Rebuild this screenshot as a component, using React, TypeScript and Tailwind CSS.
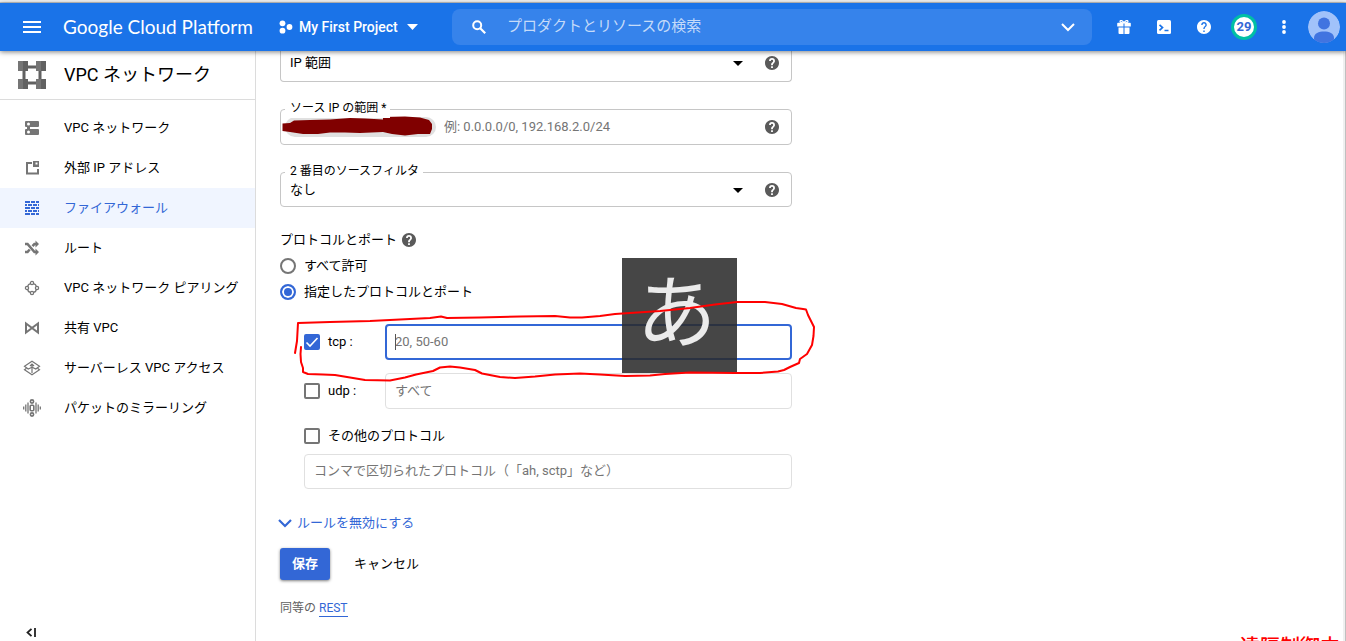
import React from 'react';

type IconProps = { children: React.ReactNode };

const NavIcon: React.FC<IconProps> = ({ children }) => (
  <svg className="w-5 h-5 shrink-0" viewBox="0 0 20 20" fill="none" aria-hidden="true">
    {children}
  </svg>
);

const navItems: { label: string; active?: boolean; icon: React.ReactNode }[] = [
  {
    label: 'VPC ネットワーク',
    icon: (
      <path
        fill="currentColor"
        fillRule="evenodd"
        d="M4 3h12a1 1 0 0 1 1 1v4a1 1 0 0 1-1 1H8v2h8a1 1 0 0 1 1 1v4a1 1 0 0 1-1 1H4a1 1 0 0 1-1-1v-4a1 1 0 0 1 1-1h1V9H4a1 1 0 0 1-1-1V4a1 1 0 0 1 1-1zm2.500 1.500a1.500 1.500 0 1 0 0 3 1.500 1.500 0 0 0 0-3zm0 8a1.500 1.500 0 1 0 0 3 1.500 1.500 0 0 0 0-3z"
      />
    ),
  },
  {
    label: '外部 IP アドレス',
    icon: (
      <>
        <path stroke="currentColor" strokeWidth="2" d="M10 5H5v10.500h11V11" />
        <path fill="currentColor" fillRule="evenodd" d="M11 3h6v6h-6zm2.500 1.500v2h2v-2z" />
      </>
    ),
  },
  {
    label: 'ファイアウォール',
    active: true,
    icon: (
      <path
        fill="currentColor"
        d="M3 3h5v2H3zM9 3h4v2H9zM14 3h3v2h-3zM3 6h2v2H3zM6 6h4v2H6zM11 6h4v2h-4zM16 6h1v2h-1zM3 9h5v2H3zM9 9h4v2H9zM14 9h3v2h-3zM3 12h2v2H3zM6 12h4v2H6zM11 12h4v2h-4zM16 12h1v2h-1zM3 15h5v2H3zM9 15h4v2H9zM14 15h3v2h-3z"
      />
    ),
  },
  {
    label: 'ルート',
    icon: (
      <>
        <path
          stroke="currentColor"
          strokeWidth="2.600"
          d="M3 6h2.500l7 8H14M3 14h2.500l2.200-2.500M10.500 8.200L12.500 6H14"
        />
        <path fill="currentColor" d="M13.500 2.500L17 6l-3.500 3.500zM13.500 10.500l3.500 3.500-3.500 3.500z" />
      </>
    ),
  },
  {
    label: 'VPC ネットワーク ピアリング',
    icon: (
      <g stroke="currentColor" strokeWidth="1.300">
        <circle cx="10" cy="5" r="1.600" />
        <circle cx="15" cy="10" r="1.600" />
        <circle cx="10" cy="15" r="1.600" />
        <circle cx="5" cy="10" r="1.600" />
        <path d="M8.400 5.800Q6 6 5.800 8.400M11.600 5.800Q14 6 14.200 8.400M5.800 11.600Q6 14 8.400 14.200M14.200 11.600Q14 14 11.600 14.200" />
      </g>
    ),
  },
  {
    label: '共有 VPC',
    icon: (
      <path
        stroke="currentColor"
        strokeWidth="2"
        d="M4 5.500v9l6-4.500zM16 5.500v9L10 10z"
      />
    ),
  },
  {
    label: 'サーバーレス VPC アクセス',
    icon: (
      <g stroke="currentColor" strokeWidth="1.200">
        <path d="M10 9.200L6.200 11 2.500 8.200 10 3.300l7.500 4.900-3.700 2.800z" />
        <path d="M4.500 10.200l-2 1.600L10 16.700l7.500-4.900-2-1.600" />
        <path d="M10 15V6M8 8l2-2 2 2" />
      </g>
    ),
  },
  {
    label: 'パケットのミラーリング',
    icon: (
      <g stroke="currentColor" strokeWidth="1.600">
        <circle cx="10" cy="3.500" r="1.600" />
        <circle cx="10" cy="16.500" r="1.600" />
        <rect x="8.200" y="7.200" width="3.600" height="5.600" rx="1" />
        <path d="M6 4.500v11M14 4.500v11M1.700 8.500v3M18.300 8.500v3M3.800 6.500v7M16.200 6.500v7" strokeWidth="1.300" />
      </g>
    ),
  },
];

const HelpButton: React.FC = () => (
  <button type="button" aria-label="ヘルプ" className="shrink-0 text-[#5a5a5a]">
    <svg className="block w-[14px] h-[14px]" viewBox="2 2 20 20" fill="currentColor">
      <path d="M12 2C6.480 2 2 6.480 2 12s4.480 10 10 10 10-4.480 10-10S17.520 2 12 2zm1.300 17h-2.600v-2.500h2.600V19zm2.100-7.700l-.9.900c-.8.800-1.200 1.500-1.200 2.900h-2.600v-.6c0-1.100.4-2.100 1.200-2.800l1.200-1.300c.4-.3.600-.8.600-1.400a1.700 1.700 0 0 0-3.400 0H7.800a4.200 4.200 0 0 1 8.400 0c0 .9-.3 1.700-.8 2.300z" />
    </svg>
  </button>
);

const SelectBox: React.FC<{ id: string; value: string }> = ({ id, value }) => (
  <div className="relative flex-1">
    <select
      id={id}
      aria-label={value}
      className="block w-full appearance-none bg-transparent outline-none text-[13px] leading-5 text-black"
    >
      <option>{value}</option>
    </select>
    <svg
      className="absolute right-0 top-2 w-[10px] h-[5px] pointer-events-none"
      viewBox="0 0 10 5"
    >
      <path d="M0 0h10L5 5z" fill="#000" />
    </svg>
  </div>
);

const FieldLabel: React.FC<{ htmlFor: string; children: string }> = ({ htmlFor, children }) => (
  <label
    htmlFor={htmlFor}
    className="absolute -top-3 left-1 pl-[5px] pr-1 bg-white text-[12px] leading-5"
  >
    {children}
  </label>
);

const CheckBox: React.FC<{ id: string; defaultChecked?: boolean }> = ({ id, defaultChecked }) => (
  <span className="relative block w-4 h-4 shrink-0">
    <input
      id={id}
      type="checkbox"
      defaultChecked={defaultChecked}
      className="peer block w-4 h-4 appearance-none border-2 border-[#757575] rounded-[2px] checked:bg-[#3367d6] checked:border-[#3367d6]"
    />
    <svg
      className="absolute inset-0 hidden peer-checked:block pointer-events-none"
      viewBox="0 0 16 16"
      fill="none"
    >
      <path d="M2.500 8.500l3.500 3.500 7.500-8" stroke="#fff" strokeWidth="1.600" />
    </svg>
  </span>
);

const RadioRow: React.FC<{ label: string; defaultChecked?: boolean }> = ({
  label,
  defaultChecked,
}) => (
  <label className="flex items-center gap-2 h-[26px]">
    <input
      type="radio"
      name="protocols"
      defaultChecked={defaultChecked}
      className="w-4 h-4 appearance-none rounded-full border-2 border-[#757575] checked:border-[#3367d6] checked:bg-[#3367d6] checked:shadow-[inset_0_0_0_2px_#fff]"
    />
    {label}
  </label>
);

const Header: React.FC = () => (
  <header className="relative z-10 shrink-0 flex items-center h-12 pr-[2px] bg-[#1a73e8] text-white shadow-[0_1px_5px_rgba(0,0,0,0.5)]">
    <div className="flex items-center w-[452px] shrink-0 pl-[23px]">
      <button type="button" aria-label="メニュー" className="mr-[22px]">
        <svg className="block w-[18px] h-3" viewBox="0 0 18 12" fill="currentColor">
          <path d="M0 0h18v2H0zM0 5h18v2H0zM0 10h18v2H0z" />
        </svg>
      </button>
      <a href="#" className="w-[216px] font-[Lato,sans-serif] text-[19px] leading-6 whitespace-nowrap">
        Google Cloud Platform
      </a>
      <button
        type="button"
        className="flex items-center text-[14px] leading-5 font-medium whitespace-nowrap"
      >
        <svg className="w-[14px] h-[14px] mr-[6px]" viewBox="0 0 14 14" fill="currentColor">
          <circle cx="3.500" cy="3.300" r="2.900" />
          <circle cx="3.500" cy="10.700" r="2.900" />
          <circle cx="10.500" cy="7" r="2.900" />
        </svg>
        My First Project
        <svg className="w-[11px] h-[6px] ml-[9px]" viewBox="0 0 11 6" fill="currentColor">
          <path d="M0 0h11L5.500 6z" />
        </svg>
      </button>
    </div>
    <div className="flex flex-1 items-center h-9 mr-3 pl-5 pr-4 rounded-lg bg-[#3683eb]">
      <svg className="w-[14px] h-[14px] mr-[21px] shrink-0" viewBox="0 0 14 14" fill="none" stroke="#fff">
        <circle cx="5.200" cy="5.200" r="4" strokeWidth="2" />
        <path d="M8.200 8.200l5 5" strokeWidth="2.200" />
      </svg>
      <input
        type="search"
        aria-label="検索"
        placeholder="プロダクトとリソースの検索"
        className="flex-1 min-w-0 pb-[2px] bg-transparent outline-none text-[15px] leading-6 placeholder:text-[#c5dbf9]"
      />
      <svg className="w-4 h-4" viewBox="0 0 16 16" fill="none" stroke="#fff" strokeWidth="2">
        <path d="M2 5l6 6 6-6" />
      </svg>
    </div>
    <button type="button" aria-label="ギフト" className="flex w-10 h-10 items-center justify-center">
      <svg className="w-[14px] h-[14px]" viewBox="0 0 14 14" fill="currentColor">
        <path d="M1.500 7.500h5V14h-4a1 1 0 0 1-1-1zM7.500 7.500h5V13a1 1 0 0 1-1 1h-4zM1 2.700h5.500v3.800H.2V3.500a.8.800 0 0 1 .8-.8zM7.500 2.700H13a.8.800 0 0 1 .8.800v3H7.500z" />
        <path
          d="M7 3C6 .6 3.200-.4 3 1.600 3 2.600 4 3 7 3zM7 3c1-2.400 3.800-3.400 4-1.400C11 2.600 10 3 7 3z"
          fill="none"
          stroke="currentColor"
          strokeWidth="1.200"
        />
      </svg>
    </button>
    <button type="button" aria-label="Cloud Shell" className="flex w-10 h-10 items-center justify-center">
      <svg className="w-[14px] h-[14px]" viewBox="0 0 14 14" fill="none">
        <rect width="14" height="14" rx="1.500" fill="#fff" />
        <path d="M2.500 4.800L5.500 7.500l-3 2.800M7.500 10.500h4" stroke="#1a73e8" strokeWidth="1.700" />
      </svg>
    </button>
    <button type="button" aria-label="ヘルプ" className="flex w-10 h-10 items-center justify-center">
      <svg className="w-[14px] h-[14px]" viewBox="2 2 20 20" fill="currentColor">
        <path d="M12 2C6.480 2 2 6.480 2 12s4.480 10 10 10 10-4.480 10-10S17.520 2 12 2zm1 17h-2v-2h2v2zm2.070-7.750l-.9.920C13.450 12.900 13 13.500 13 15h-2v-.5c0-1.100.45-2.100 1.170-2.830l1.240-1.260c.37-.36.590-.86.590-1.410 0-1.100-.9-2-2-2s-2 .9-2 2H8c0-2.210 1.790-4 4-4s4 1.790 4 4c0 .88-.36 1.680-.93 2.250z" />
      </svg>
    </button>
    <button type="button" aria-label="通知" className="flex w-10 h-10 items-center justify-center">
      <span className="flex w-[26px] h-[26px] items-center justify-center rounded-full border-[3px] border-[#00bfa5] bg-white text-[13px] leading-5 font-bold text-[#3367d6]">
        29
      </span>
    </button>
    <button type="button" aria-label="設定" className="flex w-10 h-10 items-center justify-center">
      <svg className="w-1 h-[14px]" viewBox="0 0 4 14" fill="currentColor">
        <circle cx="2" cy="2" r="1.900" />
        <circle cx="2" cy="7" r="1.900" />
        <circle cx="2" cy="12" r="1.900" />
      </svg>
    </button>
    <button type="button" aria-label="アカウント" className="flex w-10 h-10 items-center justify-center">
      <svg className="w-8 h-8 rounded-full" viewBox="0 0 32 32">
        <circle cx="16" cy="16" r="16" fill="#a1c2fa" />
        <circle cx="16" cy="12.500" r="6" fill="#4174e0" />
        <path d="M6 27c0-5 5-6.500 10-6.500S26 22 26 27v5H6z" fill="#4174e0" />
      </svg>
    </button>
  </header>
);

const Sidebar: React.FC = () => (
  <aside className="flex flex-col w-64 shrink-0 border-r border-[#dcdcdc]">
    <div className="flex items-center h-[49px] pl-[18px] gap-[18px] border-b border-[#dcdcdc]">
      <svg className="w-7 h-7" viewBox="0 0 28 28">
        <rect x="6" y="6" width="16" height="16" fill="none" stroke="#616161" strokeWidth="3" />
        <path d="M0 0h10v10H0zM18 0h10v10H18zM0 18h10v10H0zM18 18h10v10H18z" fill="#757575" />
        <path d="M5 0h5v10H5zM23 0h5v10h-5zM5 18h5v10H5zM23 18h5v10h-5z" fill="#616161" />
      </svg>
      <h1 className="text-[18px] leading-6">VPC ネットワーク</h1>
    </div>
    <nav className="flex-1 pt-2">
      {navItems.map(({ label, active, icon }) => (
        <a
          key={label}
          href="#"
          className={
            active
              ? 'flex items-center gap-[22px] h-10 pl-[22px] bg-[#f0f5ff] text-[#3367d6]'
              : 'flex items-center gap-[22px] h-10 pl-[22px] text-[#757575]'
          }
        >
          <NavIcon>{icon}</NavIcon>
          <span className={active ? 'whitespace-nowrap' : 'whitespace-nowrap text-black'}>
            {label}
          </span>
        </a>
      ))}
    </nav>
    <button type="button" aria-label="メニューを閉じる" className="self-start ml-[26px] mb-1">
      <svg className="block w-[11px] h-[9px]" viewBox="0 0 11 9" fill="none" stroke="#222">
        <path d="M5.500 .8L1.500 4.500l4 3.700" strokeWidth="1.800" />
        <path d="M9 0v9" strokeWidth="1.800" />
      </svg>
    </button>
  </aside>
);

// Hand drawn marker around the tcp row
const MarkerLoop: React.FC = () => (
  <svg
    className="absolute -left-[14px] -top-[34px] w-[534px] h-[100px] pointer-events-none"
    viewBox="290 290 534 100"
    fill="none"
    stroke="#f00"
    strokeWidth="2"
    strokeLinejoin="round"
    strokeLinecap="round"
  >
    <path d="M295 353L297 341L298 323L330 322L370 321L410 319L430 318L441 316.500L447 318L480 317.500L520 316.500L555 316L570 317.500L582 317.500L600 316L615 314L660 311L690 308L715 304.500L737 302L765 302L782 304L796 308L803 309L806 309.500L808 315L812 323L814 327L813.500 336L812 345L807 354L800 359L799 363L790 367L784 370L778 371.500L760 373L735 373L690 372.500L665 374L650 375.500L625 376L600 374.500L580 373.500L555 374.500L535 376.500L515 378L500 377L482 373.500L475 370L460 367.500L450 366.500L440 367.500L433 371L416 374.500L405 377.500L390 380.500L365 380L350 377.500L335 375L323 374.500L308 374L303 372L303 368L301 362L300.500 354L301 347" />
  </svg>
);

const boxClass = 'relative flex items-center pl-[9px] pr-3 rounded border border-[#c6c6c6]';

const RuleForm: React.FC = () => (
  <form className="w-[512px]" onSubmit={(e) => e.preventDefault()}>
    <div className="flex items-center gap-[22px] h-[31px] pl-[9px] pr-3 pb-[6px] rounded-b border border-t-0 border-[#c6c6c6]">
      <SelectBox id="source-filter" value="IP 範囲" />
      <HelpButton />
    </div>

    <div className={`${boxClass} h-9 mt-[27px]`}>
      <FieldLabel htmlFor="source-ip">ソース IP の範囲 *</FieldLabel>
      <svg className="w-[154px] h-[22px] -ml-2 shrink-0" viewBox="282 116 154 22">
        <rect x="285" y="117" width="151" height="20" rx="10" fill="#e0e0e0" />
        <path
          d="M282.500 123.500L290 123L294 120.500L310 120L330 119.500L350 118L365 118.500L383 119.500L383 117L405 116.500L420 117.500L429 120L432 124L432 129L430 134L418 134L405 135.500L392 134L383 132L360 133L345 132.500L330 132.500L318 134L303 134L290 132L282.500 131z"
          fill="#800000"
        />
      </svg>
      <input
        id="source-ip"
        placeholder="例: 0.0.0.0/0, 192.168.2.0/24"
        className="flex-1 ml-2 bg-transparent outline-none leading-5 placeholder:text-[#757575]"
      />
      <HelpButton />
    </div>

    <div className={`${boxClass} h-[35px] gap-[22px] mt-[27px]`}>
      <FieldLabel htmlFor="second-filter">2 番目のソースフィルタ</FieldLabel>
      <SelectBox id="second-filter" value="なし" />
      <HelpButton />
    </div>

    <fieldset className="mt-5">
      <div className="flex items-center gap-[5px] h-[26px]">
        <span>プロトコルとポート</span>
        <HelpButton />
      </div>
      <RadioRow label="すべて許可" />
      <RadioRow label="指定したプロトコルとポート" defaultChecked />
    </fieldset>

    <div className="pl-6 pt-[19px]">
      <div className="relative flex items-center">
        <CheckBox id="tcp" defaultChecked />
        <label htmlFor="tcp" className="w-[65px] pl-2">
          tcp :
        </label>
        <input
          aria-label="tcp ポート"
          placeholder="20, 50-60"
          className="flex-1 min-w-0 h-9 px-2 pb-[2px] rounded border-2 border-[#3367d6] outline-none placeholder:text-[#757575]"
        />
        <span className="absolute left-[91px] top-[10px] w-px h-4 bg-[#555]" />
        <div
          lang="ja"
          className="absolute left-[318px] -top-[66px] flex w-[115px] h-[115px] items-center justify-center pr-[6px] pb-[4px] bg-[#2b2b2b]/87 text-[80px] leading-none text-[#ebebeb]"
        >
          あ
        </div>
        <MarkerLoop />
      </div>

      <div className="flex items-center mt-[13px]">
        <CheckBox id="udp" />
        <label htmlFor="udp" className="w-[65px] pl-2">
          udp :
        </label>
        <input
          aria-label="udp ポート"
          placeholder="すべて"
          className="flex-1 min-w-0 h-9 px-[9px] pb-[2px] rounded border border-[#e0e0e0] outline-none placeholder:text-[#757575]"
        />
      </div>

      <div className="flex items-center h-[26px] mt-[14px]">
        <CheckBox id="other" />
        <label htmlFor="other" className="pl-2">
          その他のプロトコル
        </label>
      </div>
      <input
        aria-label="その他のプロトコル名"
        placeholder="コンマで区切られたプロトコル（「ah, sctp」など）"
        className="block w-full h-[35px] mt-[5px] px-[9px] pb-[2px] rounded border border-[#e0e0e0] outline-none [text-spacing-trim:space-all] placeholder:text-[#757575]"
      />
    </div>

    <button type="button" className="flex items-center gap-[5px] h-6 mt-[22px] -ml-[2px] text-[#3367d6]">
      <svg className="w-[14px] h-[14px]" viewBox="0 0 14 14" fill="none">
        <path d="M1 4l6 6 6-6" stroke="#3367d6" strokeWidth="2.200" />
      </svg>
      ルールを無効にする
    </button>

    <div className="flex items-center gap-3 mt-[13px]">
      <button
        type="submit"
        className="w-[50px] h-8 rounded-[3px] bg-[#3367d6] text-white font-bold shadow-[0_1px_3px_rgba(0,0,0,0.5)]"
      >
        保存
      </button>
      <button type="button" className="h-8 px-3">
        キャンセル
      </button>
    </div>

    <p className="mt-[18px] text-[12px] leading-5 text-[#616161]">
      同等の{' '}
      <a href="#" className="inline-block leading-4 text-[#3367d6] border-b border-[#3367d6]">
        REST
      </a>
    </p>
  </form>
);

export default function App() {
  return (
    <div
      lang="ja"
      className="flex flex-col h-screen overflow-hidden bg-white text-black text-[13px] leading-5 font-[Roboto,'Noto_Sans_CJK_JP',sans-serif]"
    >
      <div className="h-[3px] shrink-0 bg-[#f1f1f1] border-b border-[#c8c8c8]" />
      <Header />
      <div className="relative flex flex-1 min-h-0">
        <Sidebar />
        <main className="flex-1 min-w-0 pl-6 overflow-hidden">
          <RuleForm />
        </main>
        <div className="w-[3px] bg-[#f0f0f0] border-r border-[#c0c0c0]" />
        <div className="absolute right-[6px] bottom-0 h-2 overflow-hidden text-[20px] leading-7 font-medium text-[#f00]">
          遠隔制御中
        </div>
      </div>
    </div>
  );
}
